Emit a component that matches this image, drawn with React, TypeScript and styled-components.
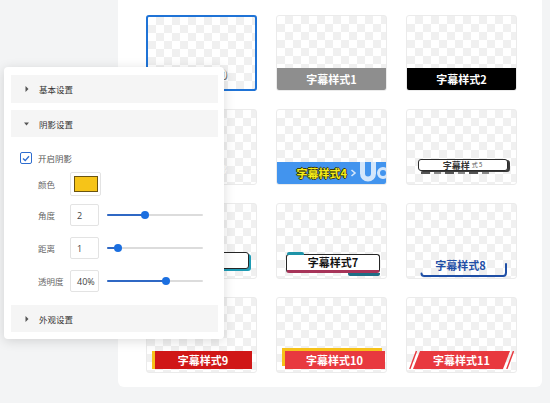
import React from "react";
import styled, { createGlobalStyle } from "styled-components";

const Global = createGlobalStyle`
  html, body { margin: 0; padding: 0; }
  body {
    background: #f3f4f5;
    font-family: "Noto Sans CJK SC", "Noto Sans", sans-serif;
    overflow: hidden;
  }
`;

const Page = styled.div`
  position: relative;
  width: 550px;
  height: 403px;
  overflow: hidden;
`;

const Card = styled.div`
  margin-left: 118px;
  width: 424px;
  box-sizing: border-box;
  padding: 15px 25px 14px 28px;
  background: #fff;
  border-radius: 0 0 6px 6px;
`;

const Grid = styled.div`
  display: grid;
  grid-template-columns: repeat(3, 111px);
  grid-auto-rows: 76px;
  column-gap: 19px;
  row-gap: 18px;
`;

const Tile = styled.div<{ $selected?: boolean }>`
  box-sizing: border-box;
  border: ${(p) => (p.$selected ? "2px solid #1f73d6" : "1px solid #ebebeb")};
  border-radius: 3px;
  background-color: #fff;
  background-image: conic-gradient(#f0f0f0 25%, transparent 0 50%, #f0f0f0 0 75%, transparent 0);
  background-size: 16px 16px;
  display: flex;
  flex-direction: column;
  justify-content: flex-end;
  align-items: center;
  overflow: hidden;
`;

const CaptionText = styled.span`
  font-size: 11px;
  font-weight: 700;
  line-height: 1;
  white-space: nowrap;
`;

const PlainCaption = styled(CaptionText)<{ $color: string; $shadow: string }>`
  color: ${(p) => p.$color};
  text-shadow: 0 0 1px ${(p) => p.$shadow}, 1px 1px 0 ${(p) => p.$shadow};
  margin-bottom: 9px;
`;

const FullBar = styled.div<{ $bg: string }>`
  align-self: stretch;
  height: 22px;
  background: ${(p) => p.$bg};
  color: #fff;
  display: flex;
  align-items: center;
  justify-content: center;
`;

const BlueBar = styled.div`
  align-self: stretch;
  height: 22px;
  background: #4294ee;
  display: flex;
  align-items: center;
  justify-content: flex-end;
  overflow: hidden;
`;

const YellowText = styled(CaptionText)`
  color: #f6ee17;
  text-shadow: 1px 0 0 #3b3a10, -1px 0 0 #3b3a10, 0 1px 0 #3b3a10, 0 -1px 0 #3b3a10;
  margin-right: 2px;
`;

const GlitchBox = styled.div`
  position: relative;
  width: 90px;
  height: 12px;
  box-sizing: border-box;
  margin-bottom: 13px;
  margin-left: 2px;
  border: 1px solid #2b2b2b;
  border-radius: 3px;
  background: #fff;
  box-shadow: 2px 1px 0 #3a3a3a;
  display: flex;
  align-items: center;
  justify-content: center;
  gap: 2px;
  color: #333;
  &::after {
    content: "";
    position: absolute;
    left: 2px;
    right: 16px;
    bottom: -4px;
    height: 2px;
    background: repeating-linear-gradient(90deg, #555 0 9px, transparent 9px 13px, #888 13px 20px, transparent 20px 24px);
  }
`;

const GlitchMain = styled.span`
  font-size: 9px;
  font-weight: 700;
  line-height: 1;
`;

const GlitchSmall = styled.span`
  font-size: 6px;
  line-height: 1;
  color: #555;
`;

const FramedBox = styled.div<{ $accent: string }>`
  width: 94px;
  height: 17px;
  box-sizing: border-box;
  margin-bottom: 9px;
  padding-left: 8px;
  border: 1px solid #262626;
  border-radius: 3px;
  background: #fff;
  box-shadow: 2px 2px 0 ${(p) => p.$accent};
  display: flex;
  align-items: center;
  justify-content: flex-start;
  color: #111;
`;

const TabBox = styled.div`
  position: relative;
  width: 94px;
  height: 19px;
  box-sizing: border-box;
  margin-bottom: 5px;
  margin-left: 3px;
  border: 1px solid #262626;
  border-bottom: 3px solid #a73459;
  border-radius: 3px;
  background: #fff;
  display: flex;
  align-items: center;
  justify-content: center;
  color: #111;
  &::before {
    content: "";
    position: absolute;
    left: 0;
    top: -3px;
    width: 17px;
    height: 3px;
    border-radius: 2px 2px 0 0;
    background: #1e93a8;
  }
  &::after {
    content: "";
    position: absolute;
    right: -1px;
    bottom: -6px;
    width: 32px;
    height: 3px;
    border-radius: 0 0 2px 2px;
    background: #1e6f86;
  }
`;

const UnderlineCaption = styled.div`
  display: flex;
  flex-direction: column;
  align-items: center;
  margin-bottom: 0;
  margin-left: 4px;
`;

const BlueText = styled(CaptionText)`
  color: #1f4fa6;
  line-height: 13px;
  margin-right: 6px;
`;

const UnderlineSvg = styled.svg`
  display: block;
  margin-top: -11px;
`;

const RedBar = styled.div<{ $bg: string }>`
  height: 18px;
  box-sizing: border-box;
  margin-bottom: 3px;
  background: ${(p) => p.$bg};
  color: #fff;
  display: flex;
  align-items: center;
  justify-content: center;
`;

const StripBar = styled(RedBar)`
  width: 100px;
  border-left: 3px solid #f6c21a;
`;

const OffsetBar = styled(RedBar)`
  width: 100px;
  margin-left: 6px;
  box-shadow: -3px -3px 0 #f6c21a;
`;

const SlantBar = styled.div`
  position: relative;
  width: 105px;
  height: 18px;
  margin-bottom: 3px;
  display: flex;
  align-items: center;
  justify-content: center;
  color: #fff;
  & > svg {
    position: absolute;
    inset: 0;
  }
  & > span {
    position: relative;
  }
`;

/* ---------- Popover ---------- */

const Popover = styled.div`
  position: absolute;
  left: 4px;
  top: 67px;
  width: 220px;
  box-sizing: border-box;
  padding: 8px 6px 7px 7px;
  background: #fff;
  border-radius: 4px;
  box-shadow: 0 2px 12px rgba(0, 0, 0, 0.14);
  display: flex;
  flex-direction: column;
`;

const SectionHeader = styled.div<{ $top?: number; $h?: number }>`
  height: ${(p) => p.$h ?? 27}px;
  margin-top: ${(p) => p.$top ?? 0}px;
  background: #f5f5f5;
  display: flex;
  align-items: center;
  padding-left: 13px;
  gap: 10px;
  font-size: 8.5px;
  color: #333;
`;

const CaretBox = styled.span`
  width: 5px;
  display: flex;
  align-items: center;
  justify-content: center;
`;

const CheckRow = styled.div`
  display: flex;
  align-items: center;
  gap: 6px;
  height: 16px;
  margin-top: 13px;
  padding-left: 9px;
  font-size: 8.5px;
  color: #555;
`;

const CheckBox = styled.span`
  width: 12px;
  height: 12px;
  box-sizing: border-box;
  border: 1px solid #2e6dcf;
  border-radius: 2px;
  background: #fff;
  display: flex;
  align-items: center;
  justify-content: center;
`;

const FieldRow = styled.div<{ $top: number; $h?: number }>`
  display: flex;
  align-items: center;
  height: ${(p) => p.$h ?? 22}px;
  margin-top: ${(p) => p.$top}px;
  padding-left: 27px;
`;

const FieldLabel = styled.span`
  width: 32px;
  font-size: 8.5px;
  color: #666;
`;

const Swatch = styled.div`
  width: 31px;
  height: 24px;
  box-sizing: border-box;
  border: 1px solid #e3e3e3;
  border-radius: 2px;
  display: flex;
  align-items: center;
  justify-content: center;
`;

const SwatchFill = styled.div<{ $color: string }>`
  width: 24px;
  height: 16px;
  box-sizing: border-box;
  border: 1px solid #6a5410;
  background: ${(p) => p.$color};
`;

const NumberBox = styled.div`
  width: 29px;
  height: 22px;
  box-sizing: border-box;
  border: 1px solid #e3e3e3;
  border-radius: 2px;
  display: flex;
  align-items: center;
  padding-left: 6px;
  font-size: 9px;
  color: #444;
  font-family: "Open Sans", "Noto Sans", sans-serif;
`;

const Track = styled.div`
  position: relative;
  width: 96px;
  height: 2px;
  margin-left: 8px;
  background: #dcdcdc;
  border-radius: 1px;
`;

const TrackFill = styled.div`
  height: 100%;
  background: #2f68c4;
  border-radius: 1px;
`;

const Thumb = styled.div`
  position: absolute;
  top: 50%;
  width: 8px;
  height: 8px;
  border-radius: 50%;
  background: #1b6fe0;
  transform: translate(-50%, -50%);
`;

const Caret = ({ open }: { open?: boolean }) => (
  <CaretBox>
    {open ? (
      <svg width="5" height="4" viewBox="0 0 5 4">
        <path d="M0 0.5 H5 L2.5 3.5 Z" fill="#555" />
      </svg>
    ) : (
      <svg width="4" height="6" viewBox="0 0 4 6">
        <path d="M0.5 0 L3.5 3 L0.5 6 Z" fill="#555" />
      </svg>
    )}
  </CaretBox>
);

const Slider = ({ value }: { value: number }) => (
  <Track>
    <TrackFill style={{ width: `${value}%` }} />
    <Thumb style={{ left: `${value}%` }} />
  </Track>
);

const fields = [
  { label: "角度", value: "2", pct: 40, top: 8 },
  { label: "距离", value: "1", pct: 11, top: 11 },
  { label: "透明度", value: "40%", pct: 61, top: 11 },
];

export default function App() {
  return (
    <Page>
      <Global />
      <Card>
        <Grid>
          <Tile $selected>
            <PlainCaption $color="#fff" $shadow="#777">字幕样式0</PlainCaption>
          </Tile>
          <Tile>
            <FullBar $bg="#8e8e8e">
              <CaptionText>字幕样式1</CaptionText>
            </FullBar>
          </Tile>
          <Tile>
            <FullBar $bg="#000">
              <CaptionText>字幕样式2</CaptionText>
            </FullBar>
          </Tile>

          <Tile>
            <PlainCaption $color="#fff" $shadow="#eee">字幕样式3</PlainCaption>
          </Tile>
          <Tile>
            <BlueBar>
              <YellowText>字幕样式4</YellowText>
              <svg width="37" height="22" viewBox="0 0 37 22">
                <path d="M2.5 8 L6 11 L2.5 14" stroke="#d3e6fb" strokeWidth="1.6" fill="none" />
                <path d="M13.5 -1 V11.5 A5.5 5.5 0 0 0 24.5 11.5 V-1" stroke="#d3e6fb" strokeWidth="5" fill="none" />
                <circle cx="34" cy="11" r="4.5" stroke="#d3e6fb" strokeWidth="3" fill="#4294ee" />
              </svg>
            </BlueBar>
          </Tile>
          <Tile>
            <GlitchBox>
              <GlitchMain>字幕样</GlitchMain>
              <GlitchSmall>式 5</GlitchSmall>
            </GlitchBox>
          </Tile>

          <Tile>
            <FramedBox $accent="#1e9bb4">
              <CaptionText>字幕样式6</CaptionText>
            </FramedBox>
          </Tile>
          <Tile>
            <TabBox>
              <CaptionText>字幕样式7</CaptionText>
            </TabBox>
          </Tile>
          <Tile>
            <UnderlineCaption>
              <BlueText>字幕样式8</BlueText>
              <UnderlineSvg width="88" height="17" viewBox="0 0 88 17">
                <path d="M1.5 12.5 Q1.5 15 4.5 15 H83 Q86 15 86 11.5 V3" stroke="#1f4fa6" strokeWidth="2" fill="none" strokeLinecap="round" />
              </UnderlineSvg>
            </UnderlineCaption>
          </Tile>

          <Tile>
            <StripBar $bg="#d01717">
              <CaptionText>字幕样式9</CaptionText>
            </StripBar>
          </Tile>
          <Tile>
            <OffsetBar $bg="#e8393f">
              <CaptionText>字幕样式10</CaptionText>
            </OffsetBar>
          </Tile>
          <Tile>
            <SlantBar>
              <svg width="105" height="18" viewBox="0 0 105 18">
                <path d="M7.5 0 L0.8 18" stroke="#e8393f" strokeWidth="1.4" />
                <polygon points="11,0 101,0 94,18 4,18" fill="#e8393f" />
                <path d="M104.5 0 L97.8 18" stroke="#e8393f" strokeWidth="1.4" />
              </svg>
              <CaptionText>字幕样式11</CaptionText>
            </SlantBar>
          </Tile>
        </Grid>
      </Card>

      <Popover>
        <SectionHeader $h={28}>
          <Caret />
          <span>基本设置</span>
        </SectionHeader>
        <SectionHeader $top={7}>
          <Caret open />
          <span>阴影设置</span>
        </SectionHeader>
        <CheckRow>
          <CheckBox>
            <svg width="8" height="7" viewBox="0 0 8 7">
              <path d="M1 3.5 L3.2 5.6 L7 1.2" stroke="#2e6dcf" strokeWidth="1.4" fill="none" />
            </svg>
          </CheckBox>
          <span>开启阴影</span>
        </CheckRow>
        <FieldRow $top={6} $h={24}>
          <FieldLabel>颜色</FieldLabel>
          <Swatch>
            <SwatchFill $color="#f6c418" />
          </Swatch>
        </FieldRow>
        {fields.map((f) => (
          <FieldRow key={f.label} $top={f.top}>
            <FieldLabel>{f.label}</FieldLabel>
            <NumberBox>{f.value}</NumberBox>
            <Slider value={f.pct} />
          </FieldRow>
        ))}
        <SectionHeader $top={13}>
          <Caret />
          <span>外观设置</span>
        </SectionHeader>
      </Popover>
    </Page>
  );
}
